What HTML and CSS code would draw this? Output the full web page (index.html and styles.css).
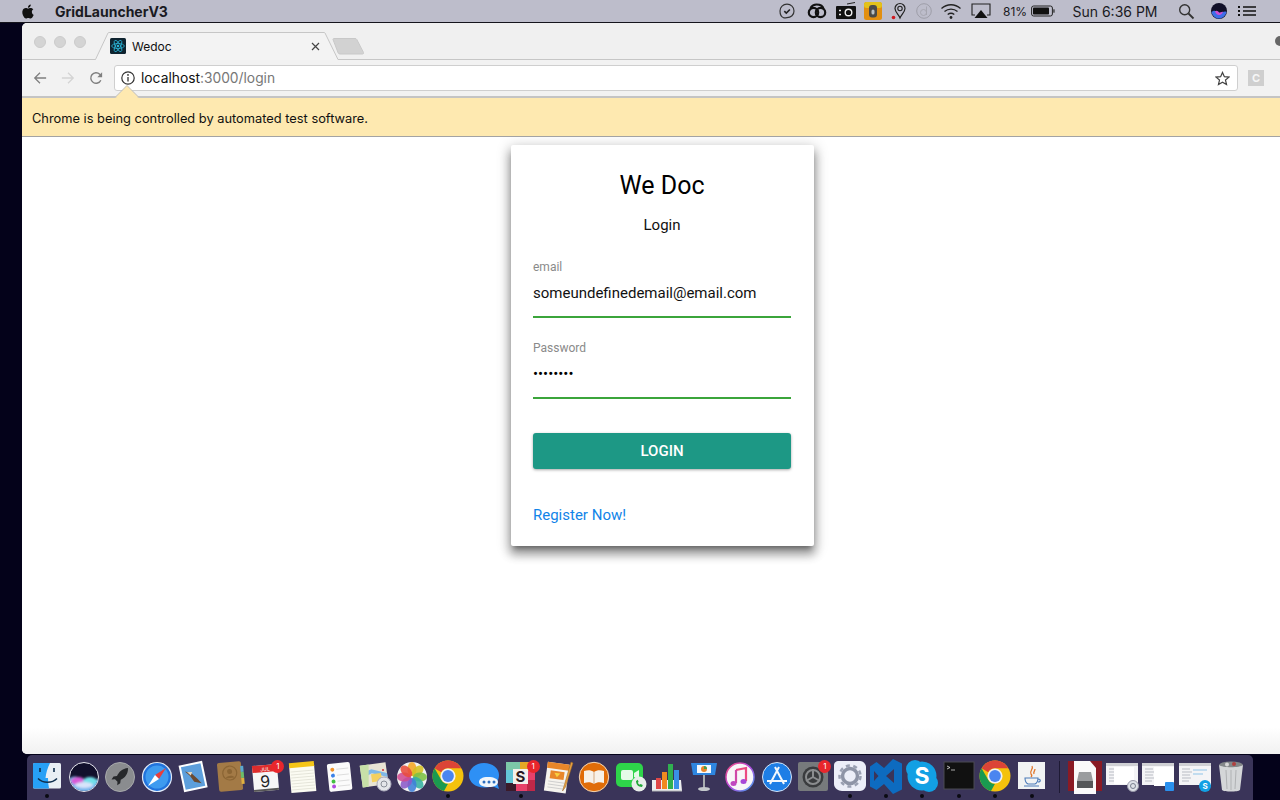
FILE: index.html
```html
<!DOCTYPE html>
<html lang="en">
<head>
<meta charset="utf-8">
<title>Wedoc</title>
<link rel="stylesheet" href="styles.css">
</head>
<body>
<svg class="defs" width="0" height="0" aria-hidden="true">
  <symbol id="chrome" viewBox="0 0 36 36">
    <circle cx="18" cy="18" r="15.500" fill="#f4c20d"/>
    <path d="M18 2.500A15.500 15.500 0 0 1 31.400 10.200H18A7.800 7.800 0 0 0 11.200 14.200L4.600 10.200A15.500 15.500 0 0 1 18 2.500Z" fill="#dc4437"/>
    <path d="M4.600 10.200L11.300 21.900A7.800 7.800 0 0 0 18 25.800L14 33A15.500 15.500 0 0 1 4.600 10.200Z" fill="#1a9a50"/>
    <circle cx="18" cy="18" r="7.600" fill="#f2f2f2"/>
    <circle cx="18" cy="18" r="5.900" fill="#4a85f0"/>
  </symbol>
  <symbol id="thumb" viewBox="0 0 36 36">
    <rect x="2" y="5" width="32" height="22" fill="#f4f4f6"/>
    <rect x="2" y="5" width="32" height="3" fill="#cfd0d4"/>
    <path d="M5 11h8M5 14h10M5 17h8M5 20h9M5 23h7" stroke="#b9bcc4" stroke-width="1"/>
  </symbol>
</svg>

<header class="menubar">
  <svg class="apple" viewBox="0 0 24 24"><path d="M12.152 6.896c-.948 0-2.415-1.078-3.960-1.040-2.040.027-3.910 1.183-4.961 3.014-2.117 3.675-.546 9.103 1.519 12.090 1.013 1.454 2.208 3.090 3.792 3.039 1.520-.065 2.090-.987 3.935-.987 1.831 0 2.350.987 3.960.948 1.637-.026 2.676-1.480 3.676-2.948 1.156-1.688 1.636-3.325 1.662-3.415-.039-.013-3.182-1.221-3.220-4.857-.026-3.040 2.480-4.494 2.597-4.559-1.429-2.090-3.623-2.324-4.390-2.376-2-.156-3.675 1.090-4.610 1.090zM15.530 3.830c.843-1.012 1.400-2.427 1.245-3.830-1.207.052-2.662.805-3.532 1.818-.780.896-1.454 2.338-1.273 3.714 1.338.104 2.715-.688 3.559-1.701"/></svg>
  <span class="app-name">GridLauncherV3</span>
  <div class="status">
    <svg class="s-ic" viewBox="0 0 18 18"><path d="M9 2.200c4 0 7 2.900 7 6.700 0 3.900-3 6.800-7 6.800-1.300 0-2.200.4-3.300.1C3.500 15 2 12.300 2 9c0-3.900 3-6.800 7-6.800Z" fill="none" stroke="#333" stroke-width="1.200"/><path d="M6.300 9.200l2 1.900 3.600-3.600" fill="none" stroke="#222" stroke-width="1.600"/></svg>
    <svg class="s-ic s-wide" viewBox="0 0 22 18"><g fill="none" stroke="#111" stroke-width="2.200"><circle cx="7.500" cy="10.500" r="4.700"/><circle cx="14.500" cy="10.500" r="4.700"/><path d="M4.500 6c1.500-2.500 3.500-3.500 6-3.500 3.500 0 6.500 1.800 7 4.500"/></g></svg>
    <svg class="s-ic s-wide" viewBox="0 0 22 18"><path d="M12 2l8-1.500" stroke="#222" stroke-width="1"/><rect x="1" y="4" width="20" height="13" rx="1" fill="#111"/><circle cx="13.500" cy="10.500" r="3.300" fill="none" stroke="#eee" stroke-width="1.400"/><path d="M4 8.500h2M4 12.500h2" stroke="#eee" stroke-width="1.600"/></svg>
    <svg class="s-ic" viewBox="0 0 18 18"><rect x="0" y="0" width="18" height="18" rx="2.500" fill="#e28f10"/><rect x="0" y="0" width="18" height="6" rx="2.500" fill="#e3c21a"/><rect x="5" y="3" width="8" height="12.500" rx="3" fill="#4a4a48"/><rect x="7.500" y="7.500" width="3" height="5" rx="1.500" fill="#b9c0c4"/></svg>
    <svg class="s-ic" viewBox="0 0 18 18"><path d="M10 1.500a5 5 0 0 1 5 5c0 3.500-3.500 6-5 9.500-1.500-3.500-5-6-5-9.500a5 5 0 0 1 5-5Z" fill="none" stroke="#222" stroke-width="1.200"/><circle cx="10" cy="6.500" r="2.200" fill="none" stroke="#222" stroke-width="1.100"/><circle cx="3.500" cy="15.500" r="1.800" fill="#d01820"/></svg>
    <svg class="s-ic" viewBox="0 0 18 18"><circle cx="9" cy="9" r="7.300" fill="none" stroke="#9a9aa4" stroke-width=".9"/><circle cx="8.500" cy="10.500" r="3" fill="none" stroke="#a4a4ae" stroke-width=".9"/><path d="M11.500 4.500v8.500" stroke="#a4a4ae" stroke-width=".9"/></svg>
    <svg class="s-ic s-wide" viewBox="0 0 22 18"><g fill="none" stroke="#222" stroke-width="1.300"><path d="M1.500 6.500C7 1.500 15 1.500 20.500 6.500"/><path d="M4.500 9.500c3.700-3.200 9.300-3.200 13 0"/><path d="M7.700 12.500c2-1.500 4.600-1.500 6.600 0"/></g><circle cx="11" cy="15.500" r="1.400" fill="#222"/></svg>
    <svg class="s-ic s-wide" viewBox="0 0 22 18"><path d="M5 13H2V2h18v11h-3" fill="none" stroke="#222" stroke-width="1.100"/><path d="M11 8l6.500 8h-13Z" fill="#111"/></svg>
    <span class="s-text s-pct">81%</span>
    <svg class="s-batt" viewBox="0 0 24 12"><rect x=".6" y="1" width="20.800" height="10" rx="2" fill="none" stroke="#222" stroke-width="1"/><rect x="2" y="2.400" width="16" height="7.200" rx=".8" fill="#111"/><rect x="22.300" y="4.300" width="1.300" height="3.400" fill="#333"/></svg>
    <span class="s-text s-time">Sun 6:36 PM</span>
    <svg class="s-ic" viewBox="0 0 18 18"><circle cx="7.700" cy="7.700" r="5" fill="none" stroke="#333" stroke-width="1.400"/><path d="M11.500 11.500l5 5" stroke="#333" stroke-width="1.800"/></svg>
    <svg class="s-ic" viewBox="0 0 18 18"><circle cx="9" cy="9" r="8" fill="#111028"/><path d="M1.500 10c3-2.500 5-.5 7.500.5s5-2 7.500-.5c-1 4-4 6.500-7.500 6.500S2.500 14 1.500 10Z" fill="#3e6ee8"/><path d="M5 9.500c2-1.500 3 0 4 1s3-1.500 4-.5c-1 2-2 3-4 3s-3-1.500-4-3.500Z" fill="#d24ed0"/></svg>
    <svg class="s-list" viewBox="0 0 18 12"><path d="M5 2h13M5 6h13M5 10h13" stroke="#111" stroke-width="1.500"/><path d="M0 2h2M0 6h2M0 10h2" stroke="#111" stroke-width="1.800"/></svg>
  </div>
</header>

<main class="window">
  <div class="tabstrip">
    <div class="lights"><i></i><i></i><i></i></div>
    <div class="tab">
      <svg class="tab-shape" viewBox="0 0 244 28"><path d="M0 27.500h.5L13 1a1 1 0 0 1 1-.5H229a1 1 0 0 1 1 .5L243 27.500h1V28H0Z" fill="#f3f3f3"/><path d="M0 27.500h.5L13 1a1 1 0 0 1 1-.5H229a1 1 0 0 1 1 .5L243 27.500h1" fill="none" stroke="#c6c6c6"/></svg>
      <svg class="favicon" viewBox="0 0 16 16"><rect width="16" height="16" rx="1.500" fill="#0f2430"/><g fill="none" stroke="#2bb5d8" stroke-width=".8"><ellipse cx="8" cy="8" rx="6.300" ry="2.500"/><ellipse cx="8" cy="8" rx="6.300" ry="2.500" transform="rotate(60 8 8)"/><ellipse cx="8" cy="8" rx="6.300" ry="2.500" transform="rotate(120 8 8)"/></g><circle cx="8" cy="8" r="1.300" fill="#2bb5d8"/></svg>
      <span class="tab-title">Wedoc</span>
      <svg class="tab-close" viewBox="0 0 9 9"><path d="M1 1l7 7M8 1l-7 7" stroke="#444" stroke-width="1.200"/></svg>
    </div>
    <svg class="newtab" viewBox="0 0 34 17"><path d="M2 1.500a1 1 0 0 1 1-1h21c.8 0 1.400.3 1.800 1l6.700 13c.3.800 0 1.500-1 1.500H9c-.8 0-1.400-.3-1.800-1Z" fill="#d2d2d2" stroke="#c8c8c8"/></svg>
    <i class="avatar"></i>
  </div>

  <div class="toolbar">
    <svg class="nav" viewBox="0 0 16 16"><path d="M15 8H2M8 2L2 8l6 6" fill="none" stroke="#7f7f7f" stroke-width="1.500"/></svg>
    <svg class="nav" viewBox="0 0 16 16"><path d="M1 8h13M8 2l6 6-6 6" fill="none" stroke="#d4d4d4" stroke-width="1.500"/></svg>
    <svg class="nav" viewBox="0 0 16 16"><path d="M13.500 10.500A6 6 0 1 1 12.300 3.800L14.500 6" fill="none" stroke="#7f7f7f" stroke-width="1.600"/><path d="M15 1.500V7H9.500Z" fill="#7f7f7f"/></svg>
    <div class="omnibox">
      <svg class="info" viewBox="0 0 14 14"><circle cx="7" cy="7" r="6.200" fill="none" stroke="#333" stroke-width="1.200"/><path d="M7 6v4.500" stroke="#333" stroke-width="1.300"/><circle cx="7" cy="3.900" r=".9" fill="#333"/></svg>
      <span class="url"><b>localhost</b>:3000/login</span>
      <svg class="star" viewBox="0 0 16 16"><path d="M8 1.500l2 4.500 4.900.5-3.700 3.200 1.100 4.800L8 12l-4.300 2.500 1.100-4.800L1.100 6.500 6 6Z" fill="none" stroke="#444" stroke-width="1.300"/></svg>
    </div>
    <span class="ext">C</span>
  </div>

  <div class="infobar">
    <svg class="arrow" viewBox="0 0 24 13"><path d="M0 12.500L12 .5l12 12" fill="#fee9b0" stroke="#bdbdbd"/><path d="M1 13L12 1.500 23 13Z" fill="#fee9b0"/></svg>
    <span class="info-text">Chrome is being controlled by automated test software.</span>
  </div>

  <section class="page">
    <div class="card">
      <h1 class="card-title">We Doc</h1>
      <h2 class="card-sub">Login</h2>
      <div class="field">
        <label class="field-label">email</label>
        <div class="field-value">someundefinedemail@email.com</div>
      </div>
      <div class="field">
        <label class="field-label">Password</label>
        <div class="field-value field-pass">••••••••</div>
      </div>
      <button class="login-btn" type="button">LOGIN</button>
      <a class="register" href="#">Register Now!</a>
    </div>
  </section>
</main>

<footer class="dock">
  <div class="dk run"><svg viewBox="0 0 36 36"><rect x="4" y="5" width="28" height="25.500" rx="1.500" fill="#e9eff4"/><path d="M5.500 5H21c-2.500 5-4 10-4.500 15H19c0 3.500.3 7 1 10.500H5.500A1.500 1.500 0 0 1 4 29V6.500A1.500 1.500 0 0 1 5.500 5Z" fill="#27a0f6"/><path d="M11 10v4M25 10v4" stroke="#10304e" stroke-width="1.600"/><path d="M9 20.500c5 5 14 5 19 0" fill="none" stroke="#10304e" stroke-width="1.500"/></svg></div>
  <div class="dk"><svg viewBox="0 0 36 36"><defs><filter id="sb" x="-20%" y="-20%" width="140%" height="140%"><feGaussianBlur stdDeviation="1"/></filter><clipPath id="sc"><circle cx="18" cy="19" r="14"/></clipPath></defs><circle cx="18" cy="19" r="14.500" fill="#12102c" stroke="#e8e8f0" stroke-width="1"/><g clip-path="url(#sc)"><g filter="url(#sb)"><path d="M2 22c5-5 9-4 16 0s12 0 16-2v14H2Z" fill="#7ab8ee"/><ellipse cx="12" cy="23" rx="7" ry="4" fill="#d85ad8"/><ellipse cx="24" cy="23" rx="7" ry="4" fill="#70e0e8"/><ellipse cx="18" cy="27" rx="9" ry="3" fill="#d8e4fa"/></g></g></svg></div>
  <div class="dk"><svg viewBox="0 0 36 36"><circle cx="18" cy="19" r="14.500" fill="#8a8c8f" stroke="#a8aaac"/><path d="M26 10c-6 .5-9 4-11 8l-3.500.5-2 3 3.500-.3 2.500 2.500-.3 3.500 3-2 .5-3.500c4-2 7.500-5 7.300-11.700Z" fill="#26282b"/></svg></div>
  <div class="dk"><svg viewBox="0 0 36 36"><circle cx="18" cy="19" r="14.500" fill="#2173dd" stroke="#dfe9f7" stroke-width="1.200"/><circle cx="18" cy="19" r="11.500" fill="#3e9bf0"/><path d="M27 10L20 21 16 17Z" fill="#ea3d3a"/><path d="M9 28L16 17l4 4Z" fill="#fff"/></svg></div>
  <div class="dk"><svg viewBox="0 0 36 36"><g transform="rotate(-12 18 18)"><rect x="6" y="5" width="24" height="27" fill="#fff"/><rect x="8" y="7" width="20" height="23" fill="#5d9fdc"/><path d="M11 12l6 3 5 7 3 5-7-3-3-7Z" fill="#6b4b32"/><path d="M13 13l5 1-2 3Z" fill="#e9dcc4"/></g></svg></div>
  <div class="dk"><svg viewBox="0 0 36 36"><g transform="rotate(-5 18 18)"><rect x="6" y="4" width="24" height="29" rx="2" fill="#a37a46"/><rect x="29" y="9" width="3" height="6" fill="#5aa8d0"/><rect x="29" y="15" width="3" height="6" fill="#6bbd6b"/><rect x="29" y="21" width="3" height="6" fill="#e0b040"/><circle cx="18" cy="15" r="7" fill="none" stroke="#8b6534" stroke-width="1.200"/><circle cx="18" cy="13.500" r="2.500" fill="#8b6534"/><path d="M13.500 20c1-3 8-3 9 0Z" fill="#8b6534"/></g></svg></div>
  <div class="dk"><svg viewBox="0 0 36 36"><g transform="rotate(-5 17 20)"><rect x="5" y="7" width="25" height="26" fill="#f6f6f6"/><rect x="5" y="7" width="25" height="7" fill="#dd2c2c"/><rect x="5" y="31" width="25" height="2" fill="#555"/><text class="cal-m" x="13" y="13">JUL</text><text class="cal-d" x="17" y="29" text-anchor="middle">9</text></g></svg><span class="badge">1</span></div>
  <div class="dk"><svg viewBox="0 0 36 36"><g transform="rotate(-5 18 18)"><rect x="5" y="6" width="25" height="28" fill="#fbfbf2"/><rect x="5" y="4" width="25" height="5" fill="#f5c518"/><path d="M6 13h23M6 16h23M6 19h23M6 22h23M6 25h23M6 28h23M6 31h23" stroke="#dcdcd0" stroke-width=".7"/></g></svg></div>
  <div class="dk"><svg viewBox="0 0 36 36"><g transform="rotate(-6 18 18)"><rect x="7" y="5" width="23" height="28" rx="2" fill="#fbfbfb"/><circle cx="12" cy="11" r="2" fill="#f0922a"/><circle cx="12" cy="17" r="2" fill="#3b82e8"/><circle cx="12" cy="23" r="2" fill="#44c044"/><circle cx="12" cy="28" r="2" fill="#b04ae0"/><path d="M16 11h12M16 17h12M16 23h12M16 28h12" stroke="#d2d2d2" stroke-width=".7"/></g></svg></div>
  <div class="dk"><svg viewBox="0 0 36 36"><g transform="rotate(-8 16 16)"><rect x="4" y="6" width="26" height="22" fill="#e8e4d4"/><path d="M4 14l11-3 15 6v4L15 15 4 19Z" fill="#7fb8e8"/><path d="M14 16h10v8H14Z" fill="#f4d060"/><path d="M4 6h9l-3 22H4Z" fill="#c8e0a8"/></g><circle cx="27" cy="26" r="7" fill="#e4e6ea" stroke="#aab"/><circle cx="27" cy="26" r="3" fill="none" stroke="#8a8f98"/><circle cx="26" cy="12" r="1" fill="#d03030"/></svg></div>
  <div class="dk"><svg viewBox="0 0 36 36"><circle cx="18" cy="19" r="15" fill="#f2f2f2"/><g fill-opacity=".88"><ellipse cx="18" cy="11" rx="4.500" ry="7" fill="#f5a623"/><ellipse cx="18" cy="11" rx="4.500" ry="7" fill="#d4c020" transform="rotate(45 18 19)"/><ellipse cx="18" cy="11" rx="4.500" ry="7" fill="#7cc043" transform="rotate(90 18 19)"/><ellipse cx="18" cy="11" rx="4.500" ry="7" fill="#35b0a0" transform="rotate(135 18 19)"/><ellipse cx="18" cy="11" rx="4.500" ry="7" fill="#3d7fd8" transform="rotate(180 18 19)"/><ellipse cx="18" cy="11" rx="4.500" ry="7" fill="#8a5ac8" transform="rotate(225 18 19)"/><ellipse cx="18" cy="11" rx="4.500" ry="7" fill="#d04a90" transform="rotate(270 18 19)"/><ellipse cx="18" cy="11" rx="4.500" ry="7" fill="#e84c3c" transform="rotate(315 18 19)"/></g></svg></div>
  <div class="dk run"><svg viewBox="0 0 36 36"><use href="#chrome"/></svg></div>
  <div class="dk"><svg viewBox="0 0 36 36"><path d="M17 5c8.500 0 15 5 15 12 0 3-1 5-2 7l2 7-7-3c-2.500 1-5 1.500-8 1.500-8.500 0-15-5.500-15-12S8.500 5 17 5Z" fill="#2e90f5"/><path d="M12 24c0-3 3-5 9-5s10 2 10 5-4 5-9 5c-6 0-10-2-10-5Z" fill="#f1f6fb"/><circle cx="17" cy="24" r="1.500" fill="#2e6fc0"/><circle cx="22" cy="24" r="1.500" fill="#2e6fc0"/><circle cx="27" cy="24" r="1.500" fill="#2e6fc0"/></svg></div>
  <div class="dk run"><svg viewBox="0 0 36 36"><rect x="3" y="4" width="29" height="29" fill="#e8416a"/><path d="M3 4h14v8H3Z" fill="#7cc8a8"/><path d="M17 4h15v9H17Z" fill="#e4a826"/><path d="M3 12h8v13H3Z" fill="#63c6d8"/><path d="M3 25h10v8H3Z" fill="#3a1a2a"/><path d="M24 22h8v11h-8Z" fill="#c02848"/><rect x="10" y="11" width="15" height="15" fill="#f4f0ec"/><text class="slack-s" x="17.500" y="24" text-anchor="middle">S</text></svg><span class="badge">1</span></div>
  <div class="dk"><svg viewBox="0 0 36 36"><g transform="rotate(8 16 18)"><rect x="6" y="5" width="22" height="29" fill="#f5f3ee"/><rect x="6" y="5" width="22" height="6" fill="#e8862a"/><rect x="10" y="13" width="14" height="8" fill="#e8862a"/><path d="M14 15l3 4 3-4Z" fill="#f8d040"/><path d="M9 24h16M9 27h16M9 30h16" stroke="#c8c8c8" stroke-width=".8"/></g><path d="M31 4l-7 24-1.500 5 3-4L33 5Z" fill="#e8a040" stroke="#946020" stroke-width=".5"/></svg></div>
  <div class="dk"><svg viewBox="0 0 36 36"><circle cx="18" cy="19" r="14.700" fill="#e06c08" stroke="#f4d8b8"/><path d="M18 14c-3-2-6-2-10-1v12c4-1 7-1 10 1 3-2 6-2 10-1V13c-4-1-7-1-10 1Z" fill="#f7f1e8"/><path d="M18 14v12" stroke="#c88a50" stroke-width=".7"/></svg></div>
  <div class="dk"><svg viewBox="0 0 36 36"><rect x="3" y="5" width="27" height="24" rx="5" fill="#2ed44a"/><rect x="8" y="12" width="12" height="10" rx="2" fill="#e4fbe8"/><path d="M21 15l5-3v10l-5-3Z" fill="#e4fbe8"/><circle cx="26" cy="26" r="7.500" fill="#e8eeea"/><path d="M23 23c0 3 2 6 6 6l.8-2-2.200-1-1 .8c-1-.6-1.500-1.300-1.800-2l.8-.9-.8-2.200Z" fill="#20a838"/></svg></div>
  <div class="dk"><svg viewBox="0 0 36 36"><path d="M3 22h29l1 11H3Z" fill="#eceef0"/><path d="M3 33h30" stroke="#b0b2b6"/><rect x="7" y="20" width="5" height="11" fill="#e04848"/><rect x="13" y="14" width="5" height="17" fill="#f08a20"/><rect x="19" y="6" width="5" height="25" fill="#30b050"/><rect x="25" y="12" width="5" height="19" fill="#3a90e8"/></svg></div>
  <div class="dk"><svg viewBox="0 0 36 36"><path d="M5 5h26l-2 12H7Z" fill="#2e86e0"/><rect x="11" y="7" width="14" height="8" fill="#f4f8fc"/><circle cx="18" cy="11" r="3" fill="#e8862a"/><path d="M18 11V8a3 3 0 0 1 3 3Z" fill="#40a050"/><rect x="17" y="17" width="2" height="13" fill="#a8acb0"/><ellipse cx="18" cy="31" rx="6" ry="2" fill="#c4c8cc"/></svg></div>
  <div class="dk"><svg viewBox="0 0 36 36"><defs><linearGradient id="it" x1="0" y1="0" x2="1" y2="1"><stop offset="0" stop-color="#f24a7a"/><stop offset=".5" stop-color="#b44ae0"/><stop offset="1" stop-color="#3fa8f0"/></linearGradient></defs><circle cx="18" cy="19" r="14" fill="#f8f6f8" stroke="url(#it)" stroke-width="1.500"/><path d="M14 12l10-2v13" fill="none" stroke="#ec4a82" stroke-width="2.200"/><path d="M14 12v13" stroke="#d048a8" stroke-width="2.200"/><ellipse cx="11.500" cy="25.500" rx="3" ry="2.500" fill="#c048c0"/><ellipse cx="21.500" cy="23.500" rx="3" ry="2.500" fill="#a848d8"/></svg></div>
  <div class="dk"><svg viewBox="0 0 36 36"><circle cx="18" cy="19" r="14.500" fill="#1e7ee6" stroke="#d4e4f8"/><path d="M16 9l9 17M20 9l-9 17M8 23h20" stroke="#f2f7fd" stroke-width="2"/></svg></div>
  <div class="dk"><svg viewBox="0 0 36 36"><rect x="3" y="4" width="30" height="29" rx="2" fill="#777a7c"/><circle cx="18" cy="19" r="10.500" fill="#3a3c3e"/><circle cx="18" cy="19" r="7" fill="none" stroke="#8b8d8f" stroke-width="2"/><path d="M18 19V11M18 19l7 4M18 19l-7 4" stroke="#8b8d8f" stroke-width="2"/></svg><span class="badge">1</span></div>
  <div class="dk run"><svg viewBox="0 0 36 36"><path d="M6 3h22c3 0 6 3 6 6v18c0 3-3 6-6 6H10c-4 0-8-3-8-7V7c0-2 2-4 4-4Z" fill="#eceef8"/><circle cx="18" cy="18" r="7.500" fill="none" stroke="#8e94a6" stroke-width="3.500"/><circle cx="18" cy="18" r="10.500" fill="none" stroke="#9aa0b2" stroke-width="2.500" stroke-dasharray="4 3.500"/></svg></div>
  <div class="dk run"><svg viewBox="0 0 36 36"><path fill-rule="evenodd" d="M25 1l9 4.500v26L25 36l-9-10-7.500 6L2 28.500v-20L8.500 4l7.500 6ZM26 11l-8 7 8 7ZM6 13v10l4.500-5Z" fill="#0d6bc0"/></svg></div>
  <div class="dk run"><svg viewBox="0 0 36 36"><circle cx="11" cy="11" r="9" fill="#12a0e4"/><circle cx="25" cy="25" r="9" fill="#12a0e4"/><circle cx="18" cy="18" r="14.500" fill="#12a0e4"/><text class="skype-s" x="18" y="26" text-anchor="middle">S</text></svg></div>
  <div class="dk run"><svg viewBox="0 0 36 36"><rect x="3" y="4" width="30" height="27" fill="#111" stroke="#4a4a52"/><path d="M6 8l3 1.500L6 11" fill="none" stroke="#ddd" stroke-width=".8"/><path d="M10 12h4" stroke="#aaa" stroke-width="1"/></svg></div>
  <div class="dk run"><svg viewBox="0 0 36 36"><use href="#chrome"/></svg></div>
  <div class="dk run"><svg viewBox="0 0 36 36"><rect x="4" y="4" width="27" height="27" fill="#f1f3f3"/><path d="M18 8c2 3-3 5-1 8 1 1 1 2 0 3M21 11c0 2-2 3-1 5" fill="none" stroke="#e0762a" stroke-width="1.300"/><path d="M11 20h13c0 3-1 5-3 6h-7c-2-1-3-3-3-6ZM24 21c3 0 3 3 0 3" fill="none" stroke="#4a7ab8" stroke-width="1.100"/><path d="M10 28h15" stroke="#4a7ab8"/></svg></div>
  <i class="dock-sep"></i>
  <div class="dk"><svg viewBox="0 0 36 36"><path d="M1 3h34v30H1Z" fill="#8a1a24"/><path d="M7 3h16l6 7v26H7Z" fill="#fafafa"/><path d="M12 14h12l2 9H10Z" fill="#9a9c9e"/><rect x="10" y="23" width="16" height="7" fill="#555759"/></svg></div>
  <div class="dk"><svg viewBox="0 0 36 36"><use href="#thumb"/><rect x="10" y="9" width="20" height="17" fill="#fff"/><circle cx="29" cy="28" r="5.500" fill="#dfe2e8" stroke="#99a"/><circle cx="29" cy="28" r="2.500" fill="none" stroke="#7a8090"/></svg></div>
  <div class="dk"><svg viewBox="0 0 36 36"><use href="#thumb"/><rect x="14" y="9" width="20" height="19" fill="#fff"/><rect x="25" y="24" width="9" height="9" rx="1" fill="#2a90ee"/></svg></div>
  <div class="dk"><svg viewBox="0 0 36 36"><use href="#thumb"/><path d="M16 12h14M16 16h10" stroke="#8fc4e8"/><circle cx="28" cy="28" r="6" fill="#12a0e4"/><text class="thumb-s" x="28" y="31" text-anchor="middle">S</text></svg></div>
  <div class="dk"><svg viewBox="0 0 36 36"><ellipse cx="18" cy="7" rx="12" ry="3.500" fill="#84888a"/><path d="M6 7l3 25c2 2 16 2 18 0l3-25c-3 3-21 3-24 0Z" fill="#d4d6d8"/><path d="M13 12l1 19M18 12v20M23 12l-1 19" stroke="#b0b2b4"/><circle cx="14" cy="6.500" r="2" fill="#d8d8d8"/><circle cx="21" cy="6" r="2" fill="#b04040"/></svg></div>
</footer>
</body>
</html>
```

FILE: styles.css
```css
* { box-sizing: border-box; }
html, body { margin: 0; height: 800px; }
body {
  width: 1280px;
  overflow: hidden;
  background: #04021a;
  font-family: "Roboto", "Liberation Sans", sans-serif;
}
.defs { display: block; height: 0; }

/* macOS menu bar */
.menubar {
  height: 23px;
  background: #bdbdcb;
  border-bottom: 1px solid #15141c;
  display: flex;
  align-items: center;
  font-family: "Inter", "Liberation Sans", sans-serif;
  color: #1a1a22;
}
.apple { width: 14px; height: 15px; margin-left: 21px; fill: #111; }
.app-name { margin-left: 20px; font-size: 14px; font-weight: 700; }
.status {
  margin-left: auto;
  margin-right: 26px;
  display: grid;
  grid-template-columns: 30px 30px 28px 26px 25px 25px 29px 32px 32px 27px 118px 24px 42px 14px;
  justify-items: center;
  align-items: center;
}
.s-ic { width: 18px; height: 18px; display: block; }
.s-wide { width: 22px; }
.s-text { font-size: 12px; white-space: nowrap; }
.s-pct { margin-left: 4px; }
.s-time { font-size: 14px; }
.s-batt { width: 24px; height: 12px; display: block; }
.s-list { width: 18px; height: 12px; display: block; }

/* browser window */
.window {
  margin-left: 22px;
  width: 1281px;
  height: 731px;
  border-radius: 5px 0 0 5px;
  overflow: hidden;
  display: flex;
  flex-direction: column;
  background: #fff;
}
.tabstrip {
  position: relative;
  height: 37px;
  flex: none;
  background: #f0f0f0;
  border-bottom: 1px solid #c6c6c6;
  display: flex;
  align-items: flex-end;
}
.lights { display: flex; gap: 8px; margin: 0 0 11px 12px; }
.lights i {
  width: 12px; height: 12px; border-radius: 50%;
  background: #d4d4d4; border: 1px solid #cbcbcb;
}
.tab {
  position: relative;
  width: 244px;
  height: 28px;
  margin: 0 0 -1px 9px;
  display: flex;
  align-items: center;
}
.tab-shape { position: absolute; inset: 0; width: 244px; height: 28px; }
.favicon { position: relative; width: 16px; height: 16px; margin: 0 0 0 15px; }
.tab-title { position: relative; font: 12px "Inter", "Liberation Sans", sans-serif; margin: 0 0 0 6px; color: #111; }
.tab-close { position: relative; width: 9px; height: 9px; margin: 0 19px 0 auto; }
.newtab { width: 34px; height: 17px; margin: 0 0 4px -8px; }
.avatar {
  position: absolute; left: 1253px; top: 13px;
  width: 10px; height: 10px; border-radius: 50%; background: #666;
}
.toolbar {
  position: relative;
  height: 38px;
  flex: none;
  background: #f2f2f2;
  border-bottom: 2px solid #c4c4c4;
  display: flex;
  align-items: center;
  padding: 0 0 0 11px;
}
.nav { width: 14px; height: 14px; margin-right: 14px; }
.nav:nth-child(3) { margin-right: 11px; }
.omnibox {
  width: 1124px;
  height: 26px;
  margin-left: 0;
  background: #fff;
  border: 1px solid #cfcfcf;
  border-radius: 3px;
  display: flex;
  align-items: center;
  padding: 0 7px 0 6px;
}
.info { width: 14px; height: 14px; }
.url { margin: 0 0 0 6px; font: 13.800px "Inter", "Liberation Sans", sans-serif; color: #777; }
.url b { font-weight: 400; color: #111; }
.star { width: 15px; height: 15px; margin-left: auto; }
.ext {
  width: 16px; height: 16px; margin-left: 10px;
  background: #cfcfcf; color: #f6f6f6;
  font: 700 11px/16px "Inter", "Liberation Sans", sans-serif;
  text-align: center;
}
.infobar {
  position: relative;
  height: 39px;
  flex: none;
  background: #fee9b0;
  border-bottom: 1px solid #a3a3a3;
  display: flex;
  align-items: center;
  padding: 2px 0 0 10px;
}
.arrow { position: absolute; left: 93px; top: -13px; width: 24px; height: 13px; }
.info-text { font: 12.840px "Inter", "Liberation Sans", sans-serif; color: #111; }
.page {
  flex: 1;
  background: linear-gradient(to bottom, #fff 0, #fff 590px, #f1f1f1 100%);
  padding-top: 8px;
}

/* login card */
.card {
  width: 303px;
  height: 401px;
  margin: 0 auto;
  background: #fff;
  border-radius: 2px;
  padding: 27px 23px 19px 22px;
  box-shadow: 0 8px 10px 1px rgba(0,0,0,.3), 0 3px 14px 2px rgba(0,0,0,.2), 0 5px 5px -3px rgba(0,0,0,.35);
}
.card-title {
  margin: 0;
  font-size: 25px; font-weight: 400; line-height: 28px;
  text-align: center; color: #000;
}
.card-sub {
  margin: 13px 0 0;
  font-size: 15px; font-weight: 400; line-height: 24px;
  text-align: center; color: #111;
}
.field { margin-top: 22px; border-bottom: 2px solid #3ba53b; padding-bottom: 11px; }
.field-label { display: block; font-size: 12px; line-height: 16px; color: #8a8a8a; }
.field-value { margin-top: 6px; font-size: 15px; line-height: 24px; color: #111; }
.field-pass { color: #000; }
.login-btn {
  display: block;
  width: 100%;
  height: 36px;
  margin-top: 34px;
  border: 0;
  border-radius: 3px;
  background: #1d9885;
  color: #fff;
  font: 500 15px "Roboto", sans-serif;
  box-shadow: 0 1px 3px rgba(0,0,0,.35);
}
.register {
  display: block;
  margin-top: 34px;
  font-size: 15px;
  line-height: 24px;
  color: #1184e8;
  text-decoration: none;
}

/* dock */
.dock {
  margin: 1px 0 0 27px;
  width: 1226px;
  height: 45px;
  border-radius: 5px 5px 0 0;
  background: #3a3459;
  display: flex;
  padding: 3px 0 0 2px;
  align-items: flex-start;
}
.dk { position: relative; flex: none; width: 36.480px; height: 36px; display: flex; justify-content: center; }
.dk svg { width: 36px; height: 36px; display: block; flex: none; }
.dk.run::after {
  content: "";
  position: absolute; left: 50%; top: 36px;
  width: 4px; height: 4px; margin-left: -2px;
  border-radius: 50%; background: #0a0a12;
}
.badge {
  position: absolute; right: 0; top: 2px;
  width: 13px; height: 13px; border-radius: 50%;
  background: #e8262c; color: #fff;
  font: 8px/13px "Inter", "Liberation Sans", sans-serif;
  text-align: center;
}
.dock-sep { flex: none; width: 1px; height: 32px; margin: 3px 7px 0 9px; background: #1e1a34; }
.cal-m { font: 5px "Inter", "Liberation Sans", sans-serif; fill: #fff; }
.cal-d { font: 16px "Inter", "Liberation Sans", sans-serif; fill: #222; }
.slack-s { font: 700 15px "Inter", "Liberation Sans", sans-serif; fill: #2a1a22; }
.skype-s { font: 700 23px "Inter", "Liberation Sans", sans-serif; fill: #fff; }
.thumb-s { font: 700 8px "Inter", "Liberation Sans", sans-serif; fill: #fff; }
```
